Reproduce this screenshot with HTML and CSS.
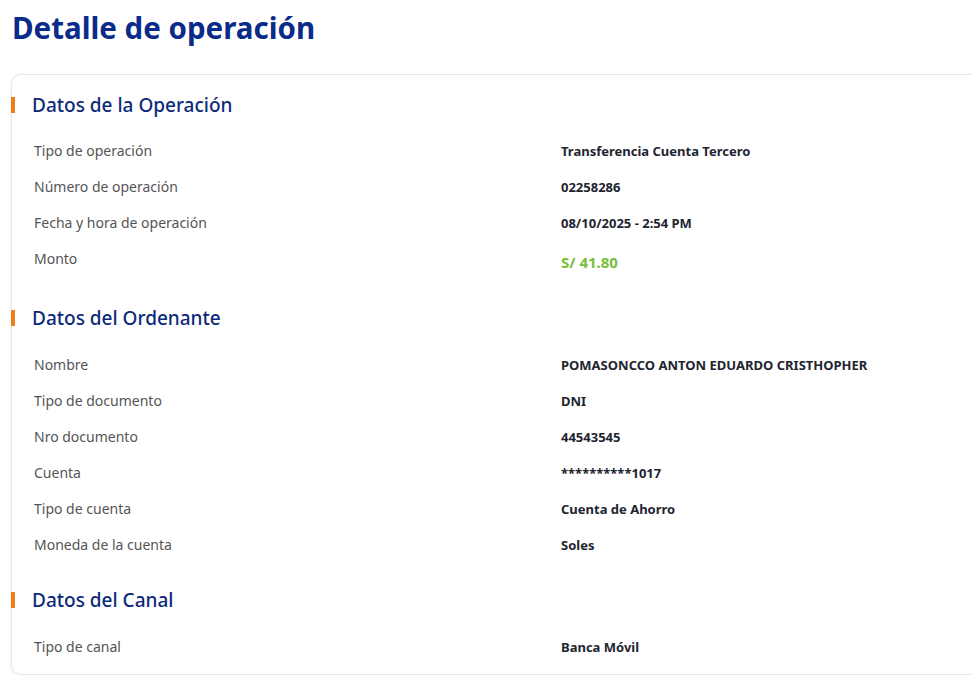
FILE: index.html
```html
<!DOCTYPE html>
<html>

<head>
    <title>Detalle de operación</title>

    <link rel="stylesheet" href="styles.css">

</head>

<body>
    <h1 class="title">Detalle de operación</h1>

    <div class="card">
        <div class="section">
            <h2 class="section-title">Datos de la Operación</h2>
            <div class="row">
                <span class="label">Tipo de operación</span>
                <span class="value">Transferencia Cuenta Tercero</span>
            </div>
            <div class="row">
                <span class="label">Número de operación</span>
                <span class="value">02258286</span>
            </div>
            <div class="row">
                <span class="label">Fecha y hora de operación</span>
                <span class="value">08/10/2025 - 2:54 PM</span>
            </div>
            <div class="row">
                <span class="label">Monto</span>
                <span class="value amount">S/ 41.80</span>
            </div>
        </div>

        <div class="section">
            <h2 class="section-title">Datos del Ordenante</h2>
            <div class="row">
                <span class="label">Nombre</span>
                <span class="value">POMASONCCO ANTON EDUARDO CRISTHOPHER</span>
            </div>
            <div class="row">
                <span class="label">Tipo de documento</span>
                <span class="value">DNI</span>
            </div>
            <div class="row">
                <span class="label">Nro documento</span>
                <span class="value">44543545</span>
            </div>
            <div class="row">
                <span class="label">Cuenta</span>
                <span class="value">**********1017</span>
            </div>
            <div class="row">
                <span class="label">Tipo de cuenta</span>
                <span class="value">Cuenta de Ahorro</span>
            </div>
            <div class="row">
                <span class="label">Moneda de la cuenta</span>
                <span class="value">Soles</span>
            </div>
        </div>

        <div class="section section-last">
            <h2 class="section-title">Datos del Canal</h2>
            <div class="row">
                <span class="label">Tipo de canal</span>
                <span class="value">Banca Móvil</span>
            </div>
        </div>
    </div>
</body>

</html>
```

FILE: styles.css
```css
body {
    margin: 0;

    background: #fff;
    font-family: "Noto Sans", sans-serif;
    color: #1e2530;
}

.title {
    margin: 10px 12px 28px;

    font-size: 29.5px;
    line-height: 36px;
    font-weight: bold;
    color: #0a2b8a;
}

/* la tarjeta sigue mas alla del borde derecho de la ventana */
.card {
    margin-left: 11px;
    padding: 16px 0 9px;

    border: 1px solid #e4e7eb;
    border-right: none;
    border-radius: 10px 0 0 10px;
    box-shadow: 0 1px 4px rgba(0, 0, 0, 0.06);
}

.section + .section {
    margin-top: 24px;
}

.section.section-last {
    margin-top: 23px;
}

.section-title {
    position: relative;

    margin: 0 0 14px;
    padding-left: 20px;

    font-size: 19px;
    line-height: 28px;
    font-weight: 500;
    color: #0d2a7a;
}

.section + .section .section-title {
    margin-bottom: 15px;
}

.section-title::before {
    content: "";
    position: absolute;
    left: -1px;
    top: 6px;

    width: 4px;
    height: 16px;

    background: #f07c1a;
}

.row {
    display: grid;
    grid-template-columns: 527px 1fr;
    align-items: start;

    padding: 8px 22px;
}

.label {
    font-size: 14px;
    line-height: 20px;
    color: #555;
}

.value {
    font-size: 13px;
    line-height: 20px;
    font-weight: bold;
    color: #1e2530;
}

.amount {
    margin-top: 3px;

    font-size: 15px;
    color: #78c03c;
}
```
